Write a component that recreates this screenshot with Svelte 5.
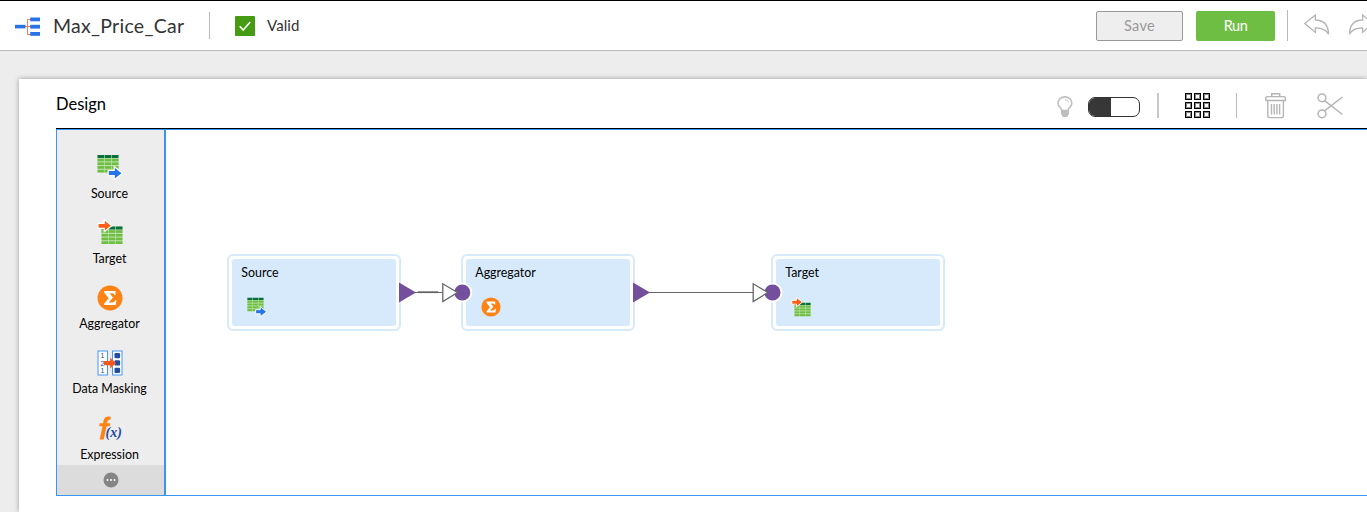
<script>
  const tools = [
    { name: 'Source', icon: 'source' },
    { name: 'Target', icon: 'target' },
    { name: 'Aggregator', icon: 'sigma' },
    { name: 'Data Masking', icon: 'mask' },
    { name: 'Expression', icon: 'fx' }
  ];
  const nodes = [
    { name: 'Source', icon: 'source', x: 61.3 },
    { name: 'Aggregator', icon: 'sigma', x: 295.3 },
    { name: 'Target', icon: 'target', x: 605.3 }
  ];
  const rows = [1, 2, 3, 4];
  const cells = [0, 1, 2];
</script>

{#snippet table(x, y)}
  <g transform="translate({x} {y})">
    <rect width="21" height="17.5" fill="#c4e5b2" />
    {#each cells as c}
      <rect x={c * 7.2} y="0" width="6.6" height="3" fill="#08703c" />
      {#each rows as r}
        <rect x={c * 7.2} y={r * 3.7} width="6.6" height="2.7" fill="#6fbe44" />
      {/each}
    {/each}
  </g>
{/snippet}

{#snippet glyph(name)}
  <svg class="glyph" viewBox="0 0 26 26">
    {#if name === 'source'}
      {@render table(0.5, 1)}
      <path d="M11.200 16.500h6v-4l8.300 6.700-8.300 6.500v-4h-6z" fill="#2773e8" stroke="#fff" stroke-width="1.200" />
    {:else if name === 'target'}
      {@render table(4.5, 7.5)}
      <path d="M1 4.300h6.200V.6l7.600 6.100-7.600 6.100V9.300H1z" fill="#ff5c14" stroke="#fff" stroke-width="1.200" />
    {:else if name === 'sigma'}
      <circle cx="13" cy="13" r="12.5" fill="#ff8214" />
      <path d="M7.300 5.900h11.200v4h-1.300c-.2-1.200-.8-1.600-2-1.600h-2.600l3.400 4.300-4.300 4.800h4c1.300 0 2-.6 2.400-2.100h1.300l-.6 4.800H7.200v-1.700l4.500-5.200-4.400-5.500z" fill="#fff" />
    {:else if name === 'mask'}
      <rect x="1" y="1" width="9.500" height="24" fill="#fff" stroke="#419afa" />
      <rect x="15.500" y="1" width="9.500" height="24" fill="#fff" stroke="#419afa" />
      <text class="digit" x="3.500" y="8.300">1</text>
      <text class="digit" x="3.500" y="15.500">2</text>
      <text class="digit" x="3.500" y="22.700">1</text>
      <g fill="#234ba0">
        <rect x="17.500" y="3" width="5.600" height="5.300" rx="1.200" />
        <rect x="17.500" y="10.300" width="5.600" height="5.300" rx="1.200" />
        <rect x="17.500" y="17.700" width="5.600" height="5.300" rx="1.200" />
      </g>
      <path d="M7 11h6.200V7.800l5.800 5.300-5.800 5.300v-3.200H7z" fill="#f4581c" />
    {:else}
      <path d="M13.800 1.800C7.500.5 6.800 4.200 6.100 8.300H2.700L2.200 11.200H5.500L2.700 24.500H6.700L9.500 11.200H12.700L13.300 8.300H10.100C10.700 5.300 11 4.300 13.300 4.900z" fill="#ff8214" />
      <text class="arg" x="8.500" y="22" textLength="16.500">(x)</text>
    {/if}
  </svg>
{/snippet}

<div class="page">
  <header>
    <svg class="mapping" width="26" height="20" viewBox="0 0 26 20">
      <path d="M9 9.500h7M16 2.500h-3.500v15H16" fill="none" stroke="#ff7850" />
      <g fill="#2773e8">
        <rect x="0" y="7.800" width="10.500" height="3.600" />
        <rect x="15.200" y=".5" width="9.800" height="3.800" />
        <rect x="15.200" y="7.800" width="9.800" height="3.800" />
        <rect x="15.200" y="15" width="9.800" height="3.800" />
      </g>
    </svg>
    <h1>Max_Price_Car</h1>
    <span class="rule title-rule"></span>
    <span class="check">
      <svg width="20" height="20" viewBox="0 0 20 20"><path d="M4.700 10.200l3.500 3.800 7-8" fill="none" stroke="#fff" stroke-width="1.600" /></svg>
    </span>
    <span class="valid">Valid</span>
    <div class="actions">
      <button class="save">Save</button>
      <button class="run">Run</button>
      <span class="rule action-rule"></span>
      <svg class="undo" width="26" height="22" viewBox="0 0 26 22">
        <path d="M.8 9.500L11.400 1v5c8.400.2 13 5.100 13.100 14.200-2.300-4.400-6.400-6.400-13.100-6.200v4.400z" />
      </svg>
      <svg class="redo" width="18" height="22" viewBox="0 0 18 22">
        <path d="M24.200 9.500L13.600 1v5C5.200 6.200.6 11.100.5 20.200 2.800 15.800 6.900 13.800 13.600 14v4.400z" />
      </svg>
    </div>
  </header>

  <section class="panel">
    <div class="toolbar">
      <h2>Design</h2>
      <div class="tools">
        <svg class="bulb" width="16" height="22" viewBox="0 0 16 22">
          <path d="M5 14.500C4.500 11.500 1 10.800 1 7.200a6.900 6.400 0 0 1 13.800 0c0 3.600-3.500 4.300-4 7.300z" fill="none" stroke="#c2c2c2" stroke-width="1.700" />
          <path d="M8 3.800c2 0 3.300 1 3.500 2.800" fill="none" stroke="#c2c2c2" />
          <path d="M4 14h8v4l-2 3H6l-2-3z" fill="#bdbdbd" />
        </svg>
        <span class="toggle"><i></i></span>
        <span class="rule wide"></span>
        <svg class="grid" width="25" height="25" viewBox="0 0 25 25">
          {#each cells as r}
            {#each cells as c}
              <rect x={c * 9 + 1.5} y={r * 9 + 1.5} width="4" height="4" fill="none" stroke="#888" />
              <rect x={c * 9 + 0.5} y={r * 9 + 0.5} width="6" height="6" fill="none" stroke="#000" />
            {/each}
          {/each}
        </svg>
        <span class="rule second"></span>
        <svg class="trash" width="22" height="26" viewBox="0 0 22 26">
          <path d="M6.700 3.500V.8h8v2.700M.8 7.500V5.200q0-1.600 1.600-1.600h16.400q1.600 0 1.600 1.600v2.300zM2.800 7.500v15.600q0 1.500 1.500 1.500h12.600q1.500 0 1.500-1.500V7.500M6.500 11v10.500M9.200 11v10.500M11.900 11v10.500M14.600 11v10.500" fill="none" stroke="#b5b5b5" stroke-width="1.400" />
        </svg>
        <svg class="scissors" width="27" height="26" viewBox="0 0 27 26">
          <g fill="none" stroke="#b5b5b5" stroke-width="1.500">
            <circle cx="5" cy="4.800" r="3.900" />
            <circle cx="5" cy="20.800" r="3.900" />
            <path d="M7.500 7.700L25.500 21.500M7.500 17.900L25.500 4" />
          </g>
        </svg>
      </div>
    </div>

    <div class="workspace">
      <aside>
        <ul>
          {#each tools as tool}
            <li>{@render glyph(tool.icon)}<span>{tool.name}</span></li>
          {/each}
        </ul>
        <div class="more">
          <svg width="16" height="16" viewBox="0 0 16 16">
            <circle cx="8" cy="8" r="7.500" fill="#858585" />
            <circle cx="4.500" cy="8" r="1" fill="#fff" /><circle cx="8" cy="8" r="1" fill="#fff" /><circle cx="11.500" cy="8" r="1" fill="#fff" />
          </svg>
        </div>
      </aside>

      <div class="canvas">
        {#each nodes as node}
          <div class="node" style="left: {node.x}px">
            <div class="body">
              <span>{node.name}</span>
              {@render glyph(node.icon)}
            </div>
          </div>
        {/each}
        <svg class="wires" width="800" height="365" viewBox="166 130 800 365">
          <path d="M414 292.500H443M648 292.500H753" stroke="#666" stroke-width="1.200" />
          <path d="M418 292.200H438" stroke="#666" stroke-width="1.800" />
          <g fill="#734f9e" stroke="#fff" stroke-width="2">
            <path d="M399 282.500L416 292.500 399 302.500z" stroke="none" />
            <path d="M633 282.500L650 292.500 633 302.500z" stroke="none" />
            <circle cx="462.300" cy="292.500" r="9" />
            <circle cx="772.500" cy="292.500" r="9" />
          </g>
          <g fill="#fff" stroke="#666" stroke-width="1.300">
            <path d="M442.800 283.800V301.500L457.500 292.500z" />
            <path d="M753.200 283.800V301.500L767.900 292.500z" />
          </g>
        </svg>
      </div>
    </div>
  </section>
</div>

<style>
  :global(body) { margin: 0; overflow: hidden; }
  .page {
    width: 1367px; height: 512px; overflow: hidden; box-sizing: border-box;
    background: #ededed; font-family: Lato, "Open Sans", sans-serif; color: #000;
    display: flex; flex-direction: column;
  }
  h1, h2, ul { margin: 0; padding: 0; font-weight: 400; }
  svg { display: block; flex: none; }
  header {
    box-sizing: border-box; height: 51px; flex: none; display: flex; align-items: center;
    background: #fff; border-top: 1px solid #000; border-bottom: 1px solid #b9b9b9; padding-left: 15px;
  }
  .mapping { margin-top: 2px; }
  h1 { margin-left: 12px; width: 131px; font-size: 19.500px; line-height: 26px; color: #333; white-space: nowrap; letter-spacing: .28px; padding-top: 1px; }
  .rule { width: 1px; background: #bababa; flex: none; }
  .title-rule { height: 27px; margin-left: 25px; }
  .check { width: 20px; height: 20px; margin-left: 25px; background: #459c13; border-radius: 1px; }
  .valid { margin-left: 12px; font-size: 15px; line-height: 20px; color: #333; letter-spacing: .1px; margin-top: -1px; }
  .actions { margin-left: auto; display: flex; align-items: center; width: 271px; overflow: hidden; }
  button { box-sizing: border-box; height: 30px; padding: 0; flex: none; font: 14.500px Lato, sans-serif; border-radius: 2px; }
  .save { width: 87px; color: #999; background: #eee; border: 1px solid #999; letter-spacing: .25px; }
  .run { width: 79px; margin-left: 13px; color: #fff; background: #6fbe44; border: 0; letter-spacing: -.5px; }
  .action-rule { height: 33px; margin-left: 12px; margin-top: -2px; }
  .undo, .redo { fill: #fff; stroke: #b5b5b5; stroke-width: 1.300; }
  .undo { margin-left: 16px; margin-top: -2px; }
  .redo { margin-left: 19px; margin-top: -2px; }

  .panel { flex: 1; margin: 28px 0 0 19px; background: #fff; box-shadow: 0 0 5px rgba(0, 0, 0, .35); padding-left: 37px; }
  .toolbar { height: 49px; display: flex; border-bottom: 1px solid #000; }
  h2 { font-size: 16.500px; line-height: 24px; padding-top: 13px; }
  .tools { margin-left: auto; display: flex; align-items: center; width: 310px; padding-top: 5px; height: 43px; }
  .toggle { box-sizing: border-box; width: 52px; height: 20px; margin-left: 15px; margin-top: 2px; border: 1px solid #333; border-radius: 7px; overflow: hidden; background: #fff; }
  .bulb { margin-top: 2px; }
  .toggle i { display: block; width: 22px; height: 20px; background: #373737; }
  .wide { width: 2px; height: 25px; margin-left: 17px; background: #c7c7c7; }
  .grid { margin-left: 26px; }
  .second { height: 25px; margin-left: 26px; }
  .trash { margin-left: 28px; }
  .scissors { margin-left: 30px; }

  .workspace { box-sizing: border-box; height: 367px; display: flex; border: solid #3897f5; border-width: 1px 0 1px 1px; }
  aside { width: 107px; border-right: 2px solid #3897f5; background: #ededed; display: flex; flex-direction: column; }
  ul { list-style: none; height: 335px; display: flex; flex-direction: column; box-sizing: border-box; padding-top: 24px; }
  li { height: 65.300px; flex: none; display: flex; flex-direction: column; align-items: center; font-size: 12.400px; line-height: 18px; white-space: nowrap; }
  li .glyph { width: 26px; height: 26px; margin: 0 2px 4.500px 0; }
  li span { margin-left: -2px; }
  .more { flex: 1; background: #dcdcdc; display: grid; place-items: center; }
  .canvas { flex: 1; position: relative; }
  .node { position: absolute; top: 124px; width: 173.500px; height: 77px; box-sizing: border-box; border: 2px solid #d6eafc; border-radius: 6px; background: #fff; padding: 3px; }
  .body { height: 67px; background: #d6eafc; border-radius: 3px; padding: 5px 0 0 9px; box-sizing: border-box; display: flex; flex-direction: column; font-size: 12.400px; line-height: 18px; }
  .node .glyph { width: 20px; height: 20px; margin: 15px 0 0 6px; }
  .wires { position: absolute; left: 0; top: 0; }
  .digit { font: 7px "Liberation Sans", sans-serif; fill: #234ba0; }
  .arg { font: italic 700 14px "Liberation Serif", serif; fill: #234ba0; }
</style>
